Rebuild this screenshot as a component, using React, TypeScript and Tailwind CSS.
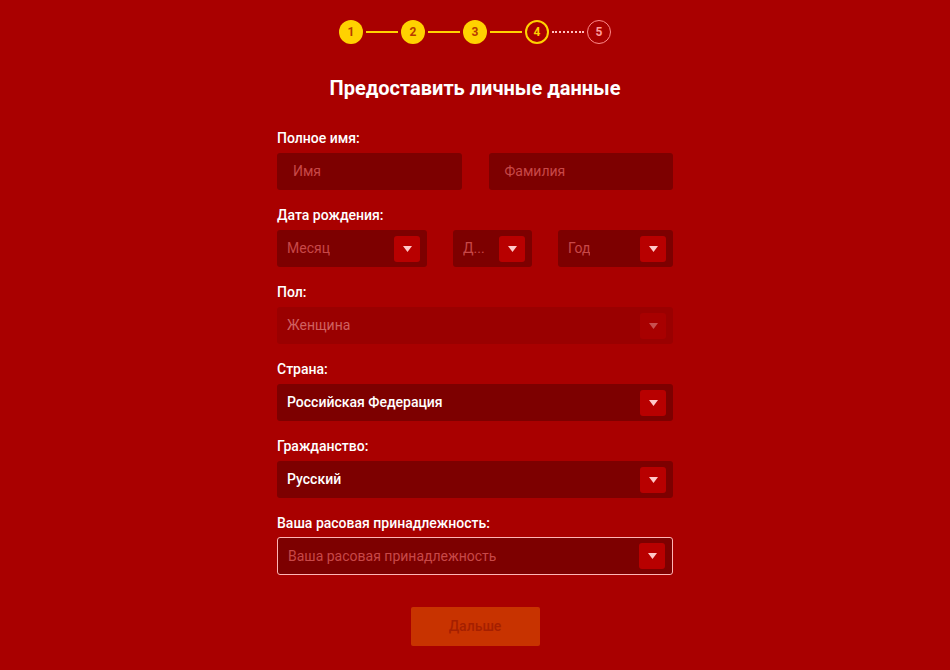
const Caret = ({ dim = false }: { dim?: boolean }) => (
  <span
    className={`flex h-[26px] w-[26px] items-center justify-center rounded-[3px] ${
      dim ? 'bg-[#a80000]' : 'bg-[#b80000]'
    }`}
  >
    <svg width="9" height="6" viewBox="0 0 9 6">
      <path d="M0 0h9L4.5 6z" fill={dim ? '#c85050' : '#ffc8c8'} />
    </svg>
  </span>
)

function Select({
  value,
  placeholder = false,
  disabled = false,
  outlined = false,
  className = '',
}: {
  value: string
  placeholder?: boolean
  disabled?: boolean
  outlined?: boolean
  className?: string
}) {
  const bg = disabled ? 'bg-[#9a0000]' : 'bg-[#7d0000]'
  const text = disabled ? 'text-[#d06060]' : placeholder ? 'text-[#c84848]' : 'text-white font-medium'
  return (
    <div
      className={`flex h-[37px] items-center justify-between rounded-[3px] pl-[10px] pr-[7px] text-[14px] ${bg} ${
        outlined ? 'border border-[#ffb4b4]' : ''
      } ${className}`}
    >
      <span className={`truncate ${text}`}>{value}</span>
      <Caret dim={disabled} />
    </div>
  )
}

function Field({ label, children }: { label: string; children: React.ReactNode }) {
  return (
    <div className="mb-[15px]">
      <div className="mb-[5px] h-[20px] text-[14px] font-medium leading-[20px] text-white">{label}</div>
      {children}
    </div>
  )
}

function Stepper() {
  const done = [1, 2, 3]
  return (
    <div className="flex h-[24px] items-center justify-center">
      {done.map((n) => (
        <div key={n} className="flex items-center">
          <span className="flex h-[24px] w-[24px] items-center justify-center rounded-full bg-[#ffd200] text-[12px] font-bold text-[#b83a00]">
            {n}
          </span>
          <span className="mx-[3px] h-[2px] w-[32px] bg-[#ffd200]" />
        </div>
      ))}
      <span className="flex h-[24px] w-[24px] items-center justify-center rounded-full border-2 border-[#ffd200] text-[12px] font-bold text-[#ffd200]">
        4
      </span>
      <span className="mx-[3px] w-[32px] border-t-2 border-dotted border-[#ffc0c0]" />
      <span className="flex h-[24px] w-[24px] items-center justify-center rounded-full border border-[#ff8a8a] text-[12px] font-bold text-[#ff9a9a]">
        5
      </span>
    </div>
  )
}

export default function App() {
  return (
    <div
      className="flex h-[670px] w-full flex-col items-center bg-[#a90000] pt-[20px]"
      style={{ fontFamily: 'Roboto, "Liberation Sans", sans-serif' }}
    >
      <Stepper />
      <h1 className="mt-[30px] text-[20px] font-bold leading-[28px] text-white">Предоставить личные данные</h1>

      <div className="mt-[26px] w-[396px]">
        <Field label="Полное имя:">
          <div className="flex gap-[27px]">
            <div className="flex h-[37px] flex-1 items-center rounded-[3px] bg-[#7d0000] px-[16px] text-[14px] text-[#c84848]">
              Имя
            </div>
            <div className="flex h-[37px] flex-1 items-center rounded-[3px] bg-[#7d0000] px-[16px] text-[14px] text-[#c84848]">
              Фамилия
            </div>
          </div>
        </Field>

        <Field label="Дата рождения:">
          <div className="flex gap-[26px]">
            <Select value="Месяц" placeholder className="w-[150px]" />
            <Select value="Д..." placeholder className="w-[79px]" />
            <Select value="Год" placeholder className="flex-1" />
          </div>
        </Field>

        <Field label="Пол:">
          <Select value="Женщина" disabled />
        </Field>

        <Field label="Страна:">
          <Select value="Российская Федерация" />
        </Field>

        <Field label="Гражданство:">
          <Select value="Русский" />
        </Field>

        <Field label="Ваша расовая принадлежность:">
          <Select value="Ваша расовая принадлежность" placeholder outlined className="-mt-px h-[38px]" />
        </Field>
      </div>

      <button className="mt-[17px] h-[39px] w-[129px] rounded-[2px] bg-[#c83300] text-[14px] font-medium text-[#a51f00]">
        Дальше
      </button>
    </div>
  )
}
